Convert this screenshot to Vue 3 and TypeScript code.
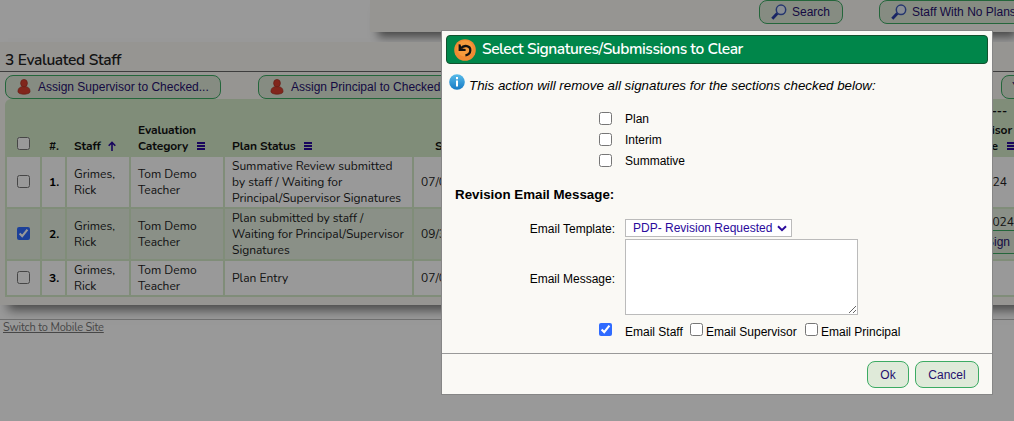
<template>
  <div class="page">
    <div class="filters">
      <button v-for="label in filterButtons" :key="label" class="btn">
        <svg class="search-icon" viewBox="0 0 16 16">
          <path d="M1.3 14.7 L6.4 9.2" stroke="#2b3fa8" stroke-width="2.8" />
          <circle cx="10" cy="5.8" r="4.7" fill="#e3ecf6" stroke="#3f5bb8" stroke-width="1.5" />
        </svg>
        <span>{{ label }}</span>
      </button>
    </div>

    <div class="staff-panel">
      <h2>3 Evaluated Staff</h2>
      <div class="toolbar">
        <button v-for="b in assignButtons" :key="b" class="btn">
          <svg class="person-icon" viewBox="0 0 14 17">
            <path d="M0.6 13.5 C0.6 9.5 3 8 7 8 C11 8 13.4 9.5 13.4 13.5 C13.4 17 0.6 17 0.6 13.5Z" fill="#d8402f" stroke="#a52c20" stroke-width=".7" />
            <ellipse cx="7" cy="4.4" rx="3.6" ry="4" fill="#d8402f" stroke="#a52c20" stroke-width=".7" />
          </svg>
          <span>{{ b }}</span>
        </button>
        <button class="btn yearly">Yearly</button>
      </div>

      <div class="table">
        <div class="row head">
          <div class="check"><input type="checkbox" /></div>
          <div>#.</div>
          <div>
            Staff
            <svg class="arrow" viewBox="0 0 8 10"><path d="M4 10V1.5M.7 4.8 4 1.4l3.3 3.4" fill="none" stroke="#2a0a9c" stroke-width="1.6" /></svg>
          </div>
          <div><p>Evaluation<br />Category <i class="menu" /></p></div>
          <div>Plan Status <i class="menu wide" /></div>
          <div class="start">Start</div>
          <div class="last"><span class="dashes">-----</span><span>Supervisor</span><span class="date">Date <i class="menu" /></span></div>
        </div>
        <div v-for="(r, i) in rows" :key="i" class="row" :class="{ selected: r.checked, short: i === 2 }">
          <div class="check"><input type="checkbox" :checked="r.checked" /></div>
          <div class="num">{{ i + 1 }}.</div>
          <div>Grimes,<br />Rick</div>
          <div>Tom Demo<br />Teacher</div>
          <div class="status">{{ r.status }}</div>
          <div>{{ r.start }}</div>
          <div class="last">
            <span :class="{ signed: r.checked }">{{ r.signed }}</span>
            <button v-if="r.checked" class="btn sign">Sign</button>
          </div>
        </div>
      </div>
    </div>
    <div class="footer"><a>Switch to Mobile Site</a></div>
  </div>

  <div class="overlay">
    <div class="dialog">
      <div class="title">
        <svg viewBox="0 0 22 22">
          <circle cx="11" cy="11" r="10.8" fill="#f08a33" />
          <circle cx="11" cy="9.5" r="8" fill="#f59a3c" />
          <path d="M7 9.2 C10 5.6 16.6 6.6 16.3 11.5 C16.1 14.4 14 16 11.4 16.3" fill="none" stroke="#111" stroke-width="2.3" />
          <path d="M4.6 5.2 V12 H11.6 V10.1 L7.4 9.6 L6.6 5.4Z" fill="#111" />
        </svg>
        <span>Select Signatures/Submissions to Clear</span>
      </div>
      <div class="notice">
        <svg viewBox="0 0 16 16">
          <defs>
            <linearGradient id="info" x1="0" y1="0" x2="0" y2="1">
              <stop offset="0" stop-color="#58bce9" />
              <stop offset="1" stop-color="#1479c4" />
            </linearGradient>
          </defs>
          <circle cx="8" cy="8" r="7.8" fill="url(#info)" />
          <path d="M7 6.6h2v6H7zM7 3h2v2.2H7z" fill="#fff" />
        </svg>
        <em>This action will remove all signatures for the sections checked below:</em>
      </div>
      <div class="sections">
        <label v-for="s in sections" :key="s"><input type="checkbox" /><span>{{ s }}</span></label>
      </div>
      <h3>Revision Email Message:</h3>
      <div class="form">
        <label>Email Template:</label>
        <div class="select">
          <select v-model="template">
            <option>PDP- Revision Requested</option>
          </select>
          <svg viewBox="0 0 10 7"><path d="M1 1.3 5 5.2 9 1.3" fill="none" stroke="#2a0a9c" stroke-width="2" /></svg>
        </div>
        <label class="message">Email Message:</label>
        <textarea v-model="message" />
      </div>
      <div class="recipients">
        <input v-model="emailStaff" type="checkbox" /><span class="staff">Email Staff</span>
        <input type="checkbox" /><span class="supervisor">Email Supervisor</span>
        <input type="checkbox" /><span>Email Principal</span>
      </div>
      <div class="actions">
        <button class="btn">Ok</button>
        <button class="btn cancel">Cancel</button>
      </div>
    </div>
  </div>
</template>

<script setup lang="ts">
import { ref } from "vue";

type Row = { status: string; start: string; signed: string; checked: boolean };

const filterButtons = ["Search", "Staff With No Plans"];
const assignButtons = ["Assign Supervisor to Checked...", "Assign Principal to Checked..."];
const sections = ["Plan", "Interim", "Summative"];

const rows: Row[] = [
  {
    status: "Summative Review submitted\nby staff / Waiting for\nPrincipal/Supervisor Signatures",
    start: "07/01/2024",
    signed: "2024",
    checked: false,
  },
  {
    status: "Plan submitted by staff /\nWaiting for Principal/Supervisor\nSignatures",
    start: "09/30/2024",
    signed: "2024",
    checked: true,
  },
  { status: "Plan Entry", start: "07/01/2024", signed: "", checked: false },
];

const template = ref("PDP- Revision Requested");
const message = ref("");
const emailStaff = ref(true);
</script>

<style>
html,
body {
  margin: 0;
  overflow: hidden;
}
</style>

<style scoped>
* {
  box-sizing: border-box;
}
.page {
  position: relative;
  width: 1014px;
  height: 421px;
  overflow: hidden;
  background: #fff;
  font-family: Nunito, Lato, sans-serif;
  font-size: 12px;
  line-height: 16px;
  color: #222;
}
input {
  width: 13px;
  height: 13px;
  margin: 0;
  flex: none;
  accent-color: #2f6bff;
}
.btn {
  display: flex;
  align-items: center;
  flex: none;
  height: 24px;
  padding: 0;
  border: 1px solid #3cab63;
  border-radius: 8px;
  background: #dfead9;
  color: #26106e;
  font: 12px "Liberation Sans", Arial, sans-serif;
  white-space: nowrap;
}
.btn svg {
  flex: none;
}
.filters {
  display: flex;
  gap: 36px;
  height: 32px;
  margin-left: 370px;
  padding-left: 389px;
  background: #faf8f4;
  box-shadow: 5px 8px 10px -3px #777;
}
.filters .btn {
  width: 84px;
  padding-left: 11px;
}
.filters .btn + .btn {
  width: 160px;
}
.search-icon {
  width: 16px;
  height: 16px;
  margin-right: 5px;
}
.staff-panel {
  position: relative;
  width: 1040px;
  height: 263px;
  margin-top: 10px;
  background: #faf8f4;
  box-shadow: 5px 8px 10px -3px #777;
}
h2 {
  height: 30px;
  margin: 0;
  padding-left: 5px;
  border-bottom: 1px solid #666;
  font-size: 15.5px;
  font-weight: 600;
  line-height: 36px;
  letter-spacing: -0.33px;
}
.toolbar {
  display: flex;
  gap: 37px;
  padding: 3px 0 0 5px;
}
.toolbar .btn {
  width: 216px;
  padding-left: 11px;
}
.toolbar .yearly {
  margin-left: 490px;
  padding-left: 10px;
}
.person-icon {
  width: 14px;
  height: 16px;
  margin-right: 7px;
}
.table {
  margin-left: 5px;
  border-radius: 6px 0 0 0;
  padding: 0 0 2px 2px;
  background: #d5ebca;
}
.row {
  display: grid;
  grid-template-columns: 33px 23px 62px 92px 187px 544px 70px;
  column-gap: 2px;
  height: 50px;
  margin-bottom: 2px;
}
.row:last-child {
  margin-bottom: 0;
}
.row.short {
  height: 34px;
}
.row > div {
  display: flex;
  align-items: center;
  padding-left: 7px;
  background: #fff;
}
.row.selected > div {
  background: #e6f1e2;
}
.row > .check {
  padding: 0 0 1px 10px;
}
.num {
  font-weight: bold;
  color: #000;
}
.status {
  white-space: pre;
}
.row.head {
  height: 58px;
  margin-bottom: 0;
  color: #111;
  font-weight: bold;
  letter-spacing: -0.1px;
}
.row.head > div {
  align-items: flex-end;
  padding-bottom: 3px;
  background: none;
}
.row.head > .check {
  padding-bottom: 7px;
}
.row.head p {
  margin: 0;
}
.row.head > .start {
  padding-left: 21px;
}
.arrow {
  width: 8px;
  height: 10px;
  margin: 0 0 3px 7px;
}
.menu {
  display: inline-block;
  width: 8px;
  height: 8px;
  margin-left: 6px;
  border-top: 2px solid #2a0a9c;
  border-bottom: 2px solid #2a0a9c;
  background: linear-gradient(#2a0a9c, #2a0a9c) center / 100% 2px no-repeat;
}
.menu.wide {
  margin: 0 0 4px 8px;
}
.row > .last {
  flex-direction: column;
  align-items: flex-end;
  justify-content: center;
  padding: 0;
  white-space: nowrap;
}
.last > span {
  margin-right: 23px;
}
.last > .signed {
  margin-right: 16px;
}
.row.head > .last {
  justify-content: flex-end;
  padding-bottom: 3px;
}
.head .last > span {
  margin-right: 18px;
}
.head .last > .dashes {
  margin-right: 23px;
  margin-bottom: 3px;
}
.head .last > .date {
  margin-right: 15px;
}
.btn.sign {
  justify-content: center;
  width: 56px;
  margin-right: 4px;
}
.footer {
  margin-top: 14px;
  padding: 0 3px;
  border-top: 1px solid #bbb;
  font-size: 11px;
  letter-spacing: -0.18px;
  color: #777;
}
.footer a {
  text-decoration: underline;
}
.overlay {
  position: absolute;
  top: 0;
  left: 0;
  width: 1014px;
  height: 421px;
  background: rgba(0, 0, 0, 0.4);
  font: 12px "Liberation Sans", Arial, sans-serif;
  color: #000;
}
.dialog {
  position: absolute;
  left: 441px;
  top: 30px;
  width: 552px;
  height: 365px;
  border: 1px solid #868686;
  background: #faf9f5;
}
.title {
  display: flex;
  align-items: center;
  height: 29px;
  margin: 4px 4px 0;
  padding-left: 7px;
  border: 1px solid #12512e;
  border-radius: 4px;
  background: #00864a;
  color: #fff;
  font: 600 15.5px/20px Nunito, Lato, sans-serif;
  letter-spacing: -0.43px;
}
.title span {
  margin-top: -2px;
}
.title svg {
  width: 22px;
  height: 22px;
  margin-right: 6px;
}
.notice {
  display: flex;
  gap: 4px;
  height: 39px;
  padding: 10px 0 0 7px;
  font-size: 13.33px;
}
.notice svg {
  width: 16px;
  height: 16px;
}
.notice em {
  line-height: 23px;
}
.sections {
  padding: 5px 0 0 157px;
}
.sections label {
  display: flex;
  align-items: center;
  gap: 13px;
  height: 21px;
}
h3 {
  margin: 16px 0 0 13px;
  font-size: 13.33px;
  line-height: 16px;
}
.form {
  display: grid;
  grid-template-columns: 173px 233px;
  gap: 2px 10px;
  align-items: center;
  margin-top: 16px;
}
.form label {
  padding-top: 1px;
  text-align: right;
}
.form .message {
  padding-top: 4px;
}
.select {
  position: relative;
  width: 167px;
  height: 18px;
}
.select select {
  display: block;
  width: 100%;
  height: 100%;
  padding: 0 0 0 7px;
  border: 1px solid #bbb;
  border-radius: 0;
  appearance: none;
  background: #fff;
  color: #2a0a9c;
  font: 12px "Liberation Sans", Arial, sans-serif;
}
.select svg {
  position: absolute;
  right: 5px;
  top: 6px;
  width: 10px;
  height: 7px;
}
textarea {
  display: block;
  width: 233px;
  height: 76px;
  border: 1px solid #bbb;
  border-radius: 0;
}
.recipients {
  display: flex;
  height: 38px;
  padding: 8px 0 0 157px;
}
.recipients span {
  margin-left: 3px;
  line-height: 19px;
  white-space: nowrap;
}
.recipients .staff {
  width: 62px;
  margin-left: 13px;
  margin-right: 3px;
}
.recipients .supervisor {
  width: 99px;
}
.actions {
  display: flex;
  justify-content: flex-end;
  gap: 6px;
  padding: 7px 13px 0 0;
  border-top: 1px solid #999;
}
.actions .btn {
  justify-content: center;
  width: 42px;
  height: 27px;
}
.actions .cancel {
  width: 64px;
}
</style>
